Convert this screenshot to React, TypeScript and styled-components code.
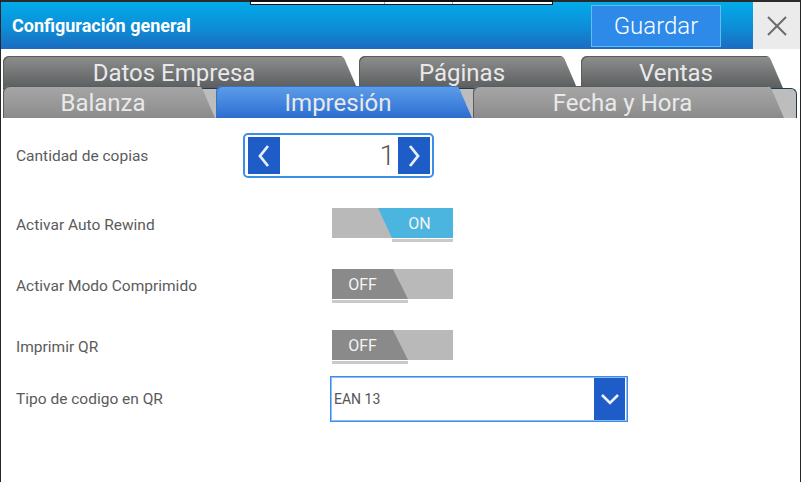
import React from 'react';
import styled, { createGlobalStyle } from 'styled-components';

const GlobalStyle = createGlobalStyle`
  html, body {
    margin: 0;
    padding: 0;
    background: #ffffff;
  }
  body {
    font-family: Roboto, "Liberation Sans", sans-serif;
  }
  * {
    box-sizing: border-box;
  }
`;

const Screen = styled.div`
  position: relative;
  width: 801px;
  height: 482px;
  overflow: hidden;
  display: flex;
  flex-direction: column;
  background: #ffffff;
  border-left: 1px solid #262626;
  border-right: 1px solid #262626;
`;

// tira blanca de la ventana de atrás, asoma por encima de la cabecera
const BackWindowStrip = styled.div`
  position: absolute;
  top: 0;
  left: 249px;
  width: 303px;
  height: 5px;
  border: 1px solid #111;
  border-top-width: 2px;
  background: linear-gradient(
    to right,
    #fff 133px,
    #aaa 133px,
    #aaa 134px,
    #fff 134px,
    #fff 201px,
    #aaa 201px,
    #aaa 202px,
    #fff 202px
  );
`;

const Header = styled.header`
  display: flex;
  align-items: center;
  flex-shrink: 0;
  height: 49px;
  padding-left: 11px;
  border-top: 2px solid #2a2a2a;
  background: linear-gradient(to bottom, #02abea 0%, #0d8dd6 55%, #1c6bbf 100%);
`;

const Title = styled.h1`
  flex: 1;
  margin: 0;
  font-size: 18px;
  font-weight: 700;
  color: #ffffff;
`;

const SaveButton = styled.button`
  width: 130px;
  height: 42px;
  margin-right: 32px;
  padding: 0;
  border: 1px solid #62bdf5;
  background: #2e8ae9;
  color: #ffffff;
  font-family: Roboto, "Liberation Sans", sans-serif;
  font-size: 24px;
  font-weight: 300;
`;

const CloseBox = styled.div`
  align-self: stretch;
  width: 47px;
  display: flex;
  align-items: center;
  justify-content: center;
  background: #ebebeb;
`;

type TabKind = 'back' | 'front' | 'active';

const tabBackground: Record<TabKind, string> = {
  back: 'linear-gradient(to bottom, #8e8e8e 0%, #6f7172 60%, #5a5e60 100%)',
  front: 'linear-gradient(to bottom, #a6a6a6 0%, #979797 60%, #8a8a8a 100%)',
  active: 'linear-gradient(to bottom, #5e9dea 0%, #3f82dc 60%, #2a6dce 100%)',
};

const BackRow = styled.div`
  display: flex;
  flex-shrink: 0;
  height: 32px;
  margin-top: 7px;
  padding-left: 2px;
`;

const FrontRow = styled.div`
  display: flex;
  align-items: flex-end;
  flex-shrink: 0;
  height: 30px;
  margin: 0 3px 0 2px;
  background: #bdbdbd;
  border-top: 1px solid #1f3b4f;
  border-right: 1px solid #1f3b4f;
  border-top-right-radius: 6px;
`;

const Tab = styled.div<{ $w: number; $gap: number; $kind: TabKind }>`
  flex: 0 0 ${p => p.$w}px;
  height: 32px;
  margin-right: ${p => p.$gap}px;
  padding: 2px 12px 0 0;
  display: flex;
  align-items: center;
  justify-content: center;
  border-radius: 6px 6px 0 0;
  clip-path: polygon(
    0 0,
    calc(100% - 17px) 0,
    calc(100% - 14px) 1px,
    calc(100% - 12.5px) 3px,
    100% 100%,
    0 100%
  );
  background: ${p => tabBackground[p.$kind]};
  box-shadow: inset 1px 1px 0 ${p => (p.$kind === 'active' ? '#3c72b8' : '#5c5c5c')};
  color: #e9e9e9;
  font-size: 24px;
  line-height: 1;
  white-space: nowrap;
`;

const Content = styled.div`
  flex: 1;
  display: flex;
  flex-direction: column;
  padding-left: 15px;
`;

const Row = styled.div<{ $h: number }>`
  display: flex;
  align-items: center;
  height: ${p => p.$h}px;
`;

const Label = styled.div<{ $w: number }>`
  flex: 0 0 ${p => p.$w}px;
  font-size: 15.5px;
  color: #5b5b5b;
`;

const Spinner = styled.div`
  display: flex;
  align-items: stretch;
  width: 191px;
  height: 45px;
  padding: 2px 2px 2px 3px;
  border: 2px solid #3b8fe8;
  border-radius: 5px;
`;

const BlueButton = styled.div<{ $w: number }>`
  flex: 0 0 ${p => p.$w}px;
  display: flex;
  align-items: center;
  justify-content: center;
  background: #1e5dc8;
`;

const SpinnerValue = styled.div`
  flex: 1;
  display: flex;
  align-items: center;
  justify-content: flex-end;
  padding-right: 3px;
  font-size: 28px;
  font-weight: 300;
  color: #555555;
`;

const Toggle = styled.div<{ $on: boolean }>`
  display: flex;
  flex-direction: column;
  align-items: ${p => (p.$on ? 'flex-end' : 'flex-start')};
  width: 121px;
`;

const Track = styled.div<{ $on: boolean }>`
  display: flex;
  justify-content: ${p => (p.$on ? 'flex-end' : 'flex-start')};
  width: 121px;
  height: 30px;
  background: #b9b9b9;
`;

const Knob = styled.div<{ $on: boolean }>`
  width: ${p => (p.$on ? 75 : 76)}px;
  height: 30px;
  display: flex;
  align-items: center;
  justify-content: center;
  padding: ${p => (p.$on ? '0 6px 0 14px' : '0 15px 0 0')};
  background: ${p => (p.$on ? '#4bb5e0' : '#8a8a8a')};
  clip-path: ${p =>
    p.$on
      ? 'polygon(0 0, 100% 0, 100% 100%, 14px 100%)'
      : 'polygon(0 0, calc(100% - 15px) 0, 100% 100%, 0 100%)'};
  color: #f4f4f4;
  font-size: 16px;
`;

const Underline = styled.div<{ $on: boolean }>`
  width: ${p => (p.$on ? 61 : 76)}px;
  height: 3px;
  margin-top: 1px;
  background: #c9c9c9;
`;

const Select = styled.div`
  display: flex;
  align-items: stretch;
  width: 298px;
  height: 46px;
  padding: 1px 2px;
  border: 1px solid #3a8cf0;
  box-shadow: inset 0 0 0 1px #8cbff7;
`;

const SelectValue = styled.div`
  flex: 1;
  display: flex;
  align-items: center;
  padding-left: 1px;
  font-size: 14px;
  color: #555555;
`;

const Chevron = ({ dir }: { dir: 'left' | 'right' | 'down' }) => {
  if (dir === 'down') {
    return (
      <svg width="20" height="12" viewBox="0 0 20 12">
        <polyline points="2,2 10,10 18,2" fill="none" stroke="#eef3fb" strokeWidth="2.6" />
      </svg>
    );
  }
  const pts = dir === 'left' ? '11,2 3,12 11,22' : '3,2 11,12 3,22';
  return (
    <svg width="14" height="24" viewBox="0 0 14 24">
      <polyline points={pts} fill="none" stroke="#e6eef9" strokeWidth="2.8" />
    </svg>
  );
};

const CloseIcon = () => (
  <svg width="22" height="22" viewBox="0 0 22 22">
    <line x1="2" y1="2" x2="20" y2="20" stroke="#6b6b6b" strokeWidth="2" />
    <line x1="20" y1="2" x2="2" y2="20" stroke="#6b6b6b" strokeWidth="2" />
  </svg>
);

const backTabs = [
  { name: 'Datos Empresa', w: 354, gap: 2 },
  { name: 'Páginas', w: 218, gap: 4 },
  { name: 'Ventas', w: 202, gap: 0 },
];

const frontTabs: { name: string; w: number; gap: number; kind: TabKind }[] = [
  { name: 'Balanza', w: 212, gap: 1, kind: 'front' },
  { name: 'Impresión', w: 256, gap: 1, kind: 'active' },
  { name: 'Fecha y Hora', w: 311, gap: 0, kind: 'front' },
];

const switches = [
  { label: 'Activar Auto Rewind', on: true, h: 64 },
  { label: 'Activar Modo Comprimido', on: false, h: 58 },
  { label: 'Imprimir QR', on: false, h: 64 },
];

const Switch = ({ on }: { on: boolean }) => (
  <Toggle $on={on}>
    <Track $on={on}>
      <Knob $on={on}>{on ? 'ON' : 'OFF'}</Knob>
    </Track>
    <Underline $on={on} />
  </Toggle>
);

export default function App() {
  return (
    <>
      <GlobalStyle />
      <Screen>
        <Header>
          <Title>Configuración general</Title>
          <SaveButton>Guardar</SaveButton>
          <CloseBox>
            <CloseIcon />
          </CloseBox>
        </Header>

        <BackRow>
          {backTabs.map(t => (
            <Tab key={t.name} $w={t.w} $gap={t.gap} $kind="back">
              {t.name}
            </Tab>
          ))}
        </BackRow>
        <FrontRow>
          {frontTabs.map(t => (
            <Tab key={t.name} $w={t.w} $gap={t.gap} $kind={t.kind}>
              {t.name}
            </Tab>
          ))}
        </FrontRow>

        <Content>
          <Row $h={75}>
            <Label $w={227}>Cantidad de copias</Label>
            <Spinner>
              <BlueButton $w={32}>
                <Chevron dir="left" />
              </BlueButton>
              <SpinnerValue>1</SpinnerValue>
              <BlueButton $w={32}>
                <Chevron dir="right" />
              </BlueButton>
            </Spinner>
          </Row>

          {switches.map(s => (
            <Row key={s.label} $h={s.h}>
              <Label $w={316}>{s.label}</Label>
              <Switch on={s.on} />
            </Row>
          ))}

          <Row $h={40}>
            <Label $w={314}>Tipo de codigo en QR</Label>
            <Select>
              <SelectValue>EAN 13</SelectValue>
              <BlueButton $w={31}>
                <Chevron dir="down" />
              </BlueButton>
            </Select>
          </Row>
        </Content>

        <BackWindowStrip />
      </Screen>
    </>
  );
}
